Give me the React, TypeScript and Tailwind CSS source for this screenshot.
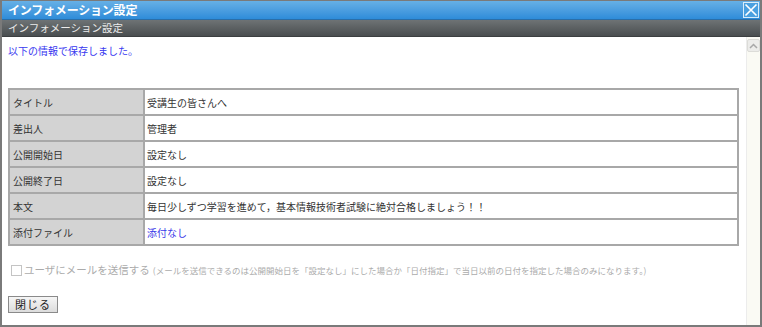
import React from "react";

const rows: { label: string; value: string; link?: boolean }[] = [
  { label: "タイトル", value: "受講生の皆さんへ" },
  { label: "差出人", value: "管理者" },
  { label: "公開開始日", value: "設定なし" },
  { label: "公開終了日", value: "設定なし" },
  { label: "本文", value: "毎日少しずつ学習を進めて，基本情報技術者試験に絶対合格しましょう！！" },
  { label: "添付ファイル", value: "添付なし", link: true },
];

export default function App() {
  return (
    <div
      className="w-[762px] h-[327px] flex flex-col bg-white border-t border-x-2 border-b-2 border-[#7a7a7a] overflow-hidden"
      style={{ fontFamily: '"Noto Sans CJK JP", "Noto Sans", sans-serif' }}
    >
      {/* title bar */}
      <div className="h-[19px] shrink-0 flex items-center justify-between pl-[6px] pr-[1px] bg-gradient-to-b from-[#66b0e6] to-[#2e8cd9] border-b border-[#2a6ea8]">
        <span className="text-white text-[12px] font-semibold leading-none tracking-[-0.2px]">インフォメーション設定</span>
        <div className="w-[16px] h-[16px] border border-[#d8ecfa] bg-[#4aa0e0] flex items-center justify-center">
          <svg width="14" height="14" viewBox="0 0 14 14">
            <path d="M1.5 1.5 L12.5 12.5 M12.5 1.5 L1.5 12.5" stroke="#ffffff" strokeWidth="1.6" />
          </svg>
        </div>
      </div>
      {/* sub bar */}
      <div className="h-[17px] shrink-0 flex items-center pl-[6px] bg-gradient-to-b from-[#6e7375] to-[#4a4e50] border-b border-[#3c3f41]">
        <span className="text-[#ececec] text-[10.5px] leading-none">インフォメーション設定</span>
      </div>
      {/* content */}
      <div className="flex-1 flex min-h-0">
        <div className="flex-1 pl-[6px] pr-[7px]">
          <div className="mt-[7px] h-[13px] text-[10px] leading-[13px] text-[#3838f0]">以下の情報で保存しました。</div>
          <table
            className="mt-[31px] w-full border border-[#a8a8a8] text-[10px] text-[#333]"
            style={{ borderCollapse: "separate", borderSpacing: 0 }}
          >
            <tbody>
              {rows.map((r) => (
                <tr key={r.label} className="h-[26px]">
                  <td className="w-[135px] bg-[#d3d3d3] border border-[#a8a8a8] pl-[3px] align-middle">{r.label}</td>
                  <td className={`border border-[#a8a8a8] pl-[2px] align-middle ${r.link ? "text-[#3a3ae8]" : ""}`}>{r.value}</td>
                </tr>
              ))}
            </tbody>
          </table>
          <div className="mt-[17px] flex items-center h-[14px] text-[#ababab]">
            <span className="ml-[3px] w-[11px] h-[11px] border border-[#c4c4c4] bg-white"></span>
            <span className="ml-[2px] text-[10.5px] leading-none">ユーザにメールを送信する</span>
            <span className="ml-[3px] text-[8.5px] leading-none">(メールを送信できるのは公開開始日を「設定なし」にした場合か「日付指定」で当日以前の日付を指定した場合のみになります。)</span>
          </div>
          <button className="mt-[19px] block w-[50px] h-[17px] border border-[#8a8a8a] bg-gradient-to-b from-[#f6f6f6] to-[#dcdcdc] text-[11px] leading-none text-[#222] tracking-[1px]">
            閉じる
          </button>
        </div>
        {/* scrollbar */}
        <div className="w-[14px] shrink-0 bg-[#fafaf4] border-l border-[#ececec] pt-[2px] flex flex-col items-center">
          <div className="w-[13px] h-[13px] rounded-[2px] bg-[#ececea] border border-[#dcdcd8] flex items-center justify-center">
            <svg width="9" height="6" viewBox="0 0 9 6">
              <path d="M1 5 L4.5 1.5 L8 5" stroke="#a8a8a8" strokeWidth="1.5" fill="none" />
            </svg>
          </div>
        </div>
      </div>
    </div>
  );
}
